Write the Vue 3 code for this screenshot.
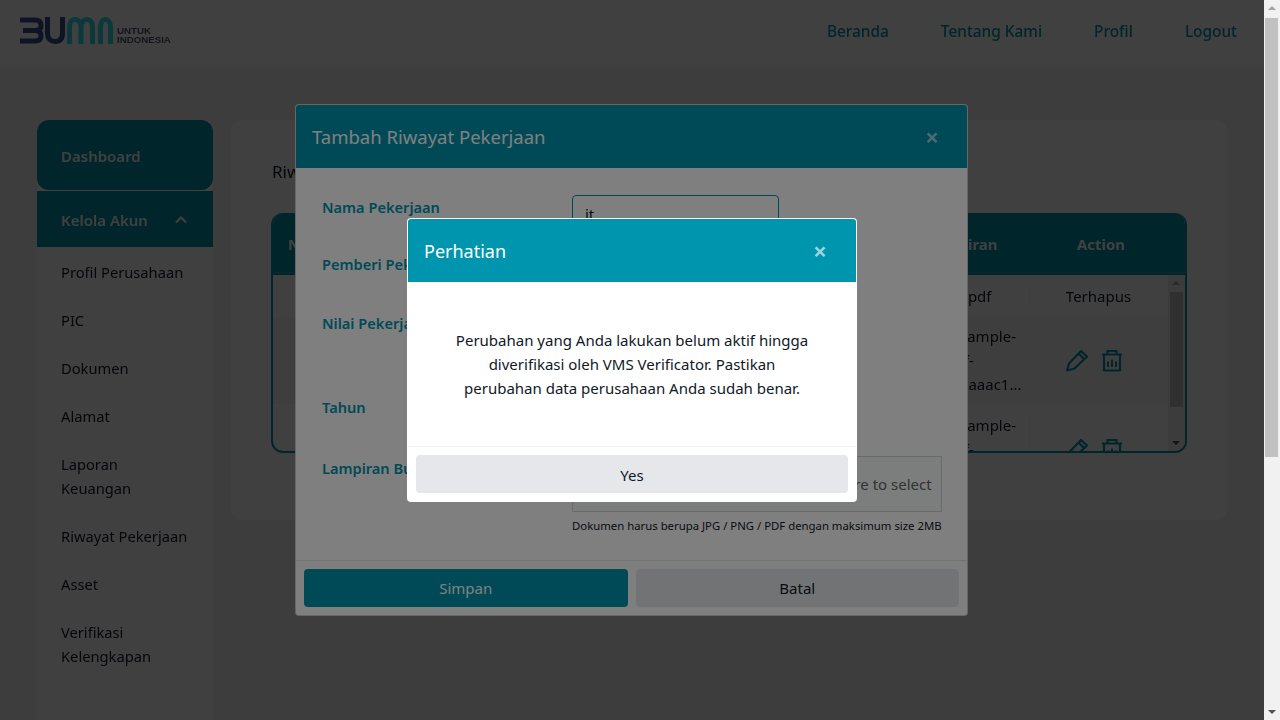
<template>
  <div class="shell">
    <div class="viewport">
      <div class="page">
        <header class="topbar">
          <div class="logo">
            <svg width="94" height="27" viewBox="0 0 94 27" fill="none" stroke-width="5">
              <path d="M0 3H15C20 3 21 6 21 8.5C21 11.5 19 13.5 15 13.5H3M15 13.5C20 13.5 21 16 21 18.5C21 22 19 24 15 24H0" stroke="#38508f" />
              <path d="M27.5 0V16C27.5 22 31 24.5 35 24.5C39.5 24.5 42.5 22 42.5 16V0" stroke="#38508f" />
              <path d="M49.5 27V10C49.5 5 52 2.5 55 2.5C58.5 2.5 61 5 61 10V27M61 10C61 5 63.5 2.5 67 2.5C70 2.5 72.5 5 72.5 10V27" stroke="#2ce0e8" />
              <path d="M80.5 27V10C80.5 5 83 2.5 85.5 2.5C88 2.5 90.5 5 90.5 10V27" stroke="#2ce0e8" />
            </svg>
            <div class="logo-text">UNTUK<br />INDONESIA</div>
          </div>
          <nav class="nav">
            <a v-for="item in navItems" :key="item">{{ item }}</a>
          </nav>
        </header>

        <main class="main">
          <aside class="sidebar">
            <div class="side-dash">Dashboard</div>
            <div class="side-group">
              <span>Kelola Akun</span>
              <svg width="12" height="8" viewBox="0 0 12 8" fill="none"><path d="M1 6.5L6 1.5L11 6.5" stroke="#fff" stroke-width="2" /></svg>
            </div>
            <ul class="side-list">
              <li v-for="item in sideItems" :key="item">{{ item }}</li>
            </ul>
          </aside>

          <section class="card">
            <h2 class="card-title">Riwayat Pekerjaan</h2>
            <div class="table-box">
              <div class="table-head">
                <div class="th-no">No</div>
                <div class="th-center">Lampiran</div>
                <div class="th-center">Action</div>
              </div>
              <div class="table-body">
                <div class="row row-first">
                  <div></div>
                  <div class="td-file">i.pdf</div>
                  <div class="td-action">Terhapus</div>
                </div>
                <div v-for="(r, i) in fileRows" :key="i" class="row" :class="r.cls">
                  <div></div>
                  <div class="td-file">sample-<br />if-<br />aaaac1...</div>
                  <div class="td-action icons">
                    <svg class="act-icon" viewBox="0 0 22 22" fill="none" stroke="#0095ae" stroke-width="2.2" stroke-linejoin="round">
                      <path d="M1 20.5L3 13.5L15 1L21 6.5L8.5 18.5Z" />
                      <path d="M12.5 3.5L18 9" />
                    </svg>
                    <svg class="act-icon" viewBox="0 0 22 22" fill="none" stroke="#0095ae" stroke-width="2.2" stroke-linejoin="round">
                      <path d="M1 4.5H21M6.5 4V1H15.5V4M3 5V20.5H19V5" />
                      <path d="M7 11.5V17M11 9.5V17M15 11.5V17" stroke-width="2" />
                    </svg>
                  </div>
                </div>
              </div>
              <div class="table-scroll">
                <i class="arrow-up"></i>
                <b class="thumb"></b>
                <i class="arrow-down"></i>
              </div>
            </div>
          </section>
        </main>
      </div>

      <div class="overlay overlay-first">
        <div class="modal modal-form">
          <div class="modal-head head-form">
            <span>Tambah Riwayat Pekerjaan</span>
            <span class="close">&times;</span>
          </div>
          <div class="form-body">
            <div class="form-row row-nama">
              <label>Nama Pekerjaan</label>
              <div class="input">it</div>
            </div>
            <div class="form-row row-pemberi"><label>Pemberi Pekerjaan</label></div>
            <div class="form-row row-nilai"><label>Nilai Pekerjaan</label></div>
            <div class="form-row row-tahun"><label>Tahun</label></div>
            <div class="form-row row-file">
              <label>Lampiran Bukti</label>
              <div class="file-col">
                <div class="dropzone">Drag and drop a file here or click here to select</div>
                <div class="hint">Dokumen harus berupa JPG / PNG / PDF dengan maksimum size 2MB</div>
              </div>
            </div>
          </div>
          <div class="modal-foot">
            <button class="btn btn-save">Simpan</button>
            <button class="btn btn-cancel">Batal</button>
          </div>
        </div>
      </div>

      <div class="overlay">
        <div class="modal modal-alert">
          <div class="modal-head head-alert">
            <span>Perhatian</span>
            <span class="close">&times;</span>
          </div>
          <div class="alert-body">
            Perubahan yang Anda lakukan belum aktif hingga diverifikasi oleh VMS Verificator. Pastikan perubahan data perusahaan Anda sudah benar.
          </div>
          <div class="alert-foot">
            <button class="btn btn-cancel btn-yes">Yes</button>
          </div>
        </div>
      </div>
    </div>

    <div class="page-scroll">
      <i class="arrow-up"></i>
      <b class="page-thumb"></b>
      <i class="arrow-down"></i>
    </div>
  </div>
</template>

<script setup>
const navItems = ['Beranda', 'Tentang Kami', 'Profil', 'Logout']
const sideItems = [
  'Profil Perusahaan',
  'PIC',
  'Dokumen',
  'Alamat',
  'Laporan Keuangan',
  'Riwayat Pekerjaan',
  'Asset',
  'Verifikasi Kelengkapan',
]
const fileRows = [{ cls: 'row-alt' }, { cls: 'row-last' }]
</script>

<style>
html,
body {
  margin: 0;
  overflow: hidden;
  font-family: "Noto Sans", "Open Sans", sans-serif;
}
</style>

<style scoped>
.shell {
  display: flex;
  width: 1280px;
  height: 720px;
}
.viewport {
  position: relative;
  width: 1264px;
  height: 720px;
  overflow: hidden;
}
.page {
  background: #f3f4f6;
  height: 720px;
  color: #111827;
  filter: brightness(0.5);
}

.topbar {
  height: 66px;
  background: #fff;
  display: flex;
  align-items: center;
  justify-content: space-between;
  padding: 0 27px 4px 20px;
  box-sizing: border-box;
}
.logo {
  display: flex;
  align-items: center;
  gap: 3px;
  margin-top: -1px;
}
.logo-text {
  font-family: "Liberation Sans", sans-serif;
  font-weight: 700;
  font-size: 9.7px;
  line-height: 9.5px;
  color: #555a70;
  margin-top: 9px;
}
.nav {
  display: flex;
  gap: 52px;
  font-size: 15.4px;
  font-weight: 500;
  color: #0095ae;
}

.main {
  display: flex;
  align-items: flex-start;
  gap: 18px;
  padding: 54px 37px 0;
}
.sidebar {
  width: 176px;
  height: 600px;
  background: #fff;
  flex-shrink: 0;
  border-radius: 12px 12px 0 0;
}
.side-dash {
  height: 70px;
  background: #0095ae;
  border-radius: 12px;
  color: #fff;
  font-weight: 600;
  font-size: 15px;
  display: flex;
  align-items: center;
  padding: 2px 0 0 24px;
  box-sizing: border-box;
}
.side-group {
  margin-top: 1px;
  height: 56px;
  background: #0095ae;
  color: #fff;
  font-weight: 600;
  font-size: 15px;
  display: flex;
  align-items: center;
  justify-content: space-between;
  padding: 2px 26px 0 24px;
  box-sizing: border-box;
}
.side-list {
  list-style: none;
  margin: 0;
  padding: 1px 0 0;
}
.side-list li {
  padding: 12px 22px 12px 24px;
  font-size: 14.7px;
  line-height: 24px;
}

.card {
  width: 996px;
  height: 400px;
  background: #fff;
  border-radius: 12px;
  padding: 40px;
  box-sizing: border-box;
}
.card-title {
  margin: 0 0 29px 1px;
  font-size: 17px;
  font-weight: 400;
  line-height: 24px;
}
.table-box {
  position: relative;
  width: 916px;
  height: 240px;
  border: 2px solid #0095ae;
  border-top: 0;
  border-radius: 12px;
  box-sizing: border-box;
  overflow: hidden;
}
.table-head {
  height: 62px;
  background: #0095ae;
  box-shadow: inset 0 -2px 0 #0095ae, inset 0 -3px 0 rgba(255, 255, 255, 0.15);
  margin: 0 -2px;
  display: grid;
  grid-template-columns: 622px 138px 140px;
  align-items: center;
  color: #fff;
  font-weight: 700;
  font-size: 15px;
}
.th-no {
  padding-left: 17px;
}
.th-center {
  text-align: center;
}
.table-body {
  height: 176px;
  overflow: hidden;
  font-size: 15px;
  line-height: 24px;
}
.row {
  display: grid;
  grid-template-columns: 687px 69px 138px;
}
.row-first {
  padding: 9px 0;
}
.row-alt {
  background: #f9fafb;
  padding: 7px 0 8px;
}
.row-last {
  padding: 9px 0 7px;
}
.td-file {
  white-space: nowrap;
  min-height: 24px;
}
.td-action {
  border-left: 1px solid #f3f4f6;
  text-align: center;
}
.icons {
  display: flex;
  align-items: center;
  justify-content: center;
  gap: 13px;
  padding: 2px 9px 0 0;
}
.act-icon {
  width: 22px;
  height: 22px;
}
.table-scroll {
  position: absolute;
  top: 62px;
  right: 0;
  bottom: 0;
  width: 17px;
  background: #f1f1f1;
}
.thumb {
  position: absolute;
  top: 17px;
  left: 2px;
  right: 2px;
  height: 115px;
  background: #c1c1c1;
}
.arrow-up {
  position: absolute;
  top: 6px;
  left: 4px;
  border: 4px solid transparent;
  border-top: 0;
  border-bottom: 4px solid #a3a3a3;
}
.arrow-down {
  position: absolute;
  bottom: 6px;
  left: 4px;
  border: 4px solid transparent;
  border-bottom: 0;
  border-top: 4px solid #505050;
}

.page-scroll {
  position: relative;
  width: 16px;
  height: 720px;
  background: #f1f1f1;
}
.page-thumb {
  position: absolute;
  top: 18px;
  left: 1px;
  right: 2px;
  height: 439px;
  background: #c1c1c1;
}

.overlay {
  position: absolute;
  inset: 0;
  display: flex;
  align-items: center;
  justify-content: center;
  background: rgba(0, 0, 0, 0.5);
}
.overlay-first {
  background: none;
}
.modal {
  background: #fff;
  border: 1px solid rgba(0, 0, 0, 0.2);
  border-radius: 4px;
  box-sizing: border-box;
  overflow: hidden;
  color: #111827;
}
.modal-head {
  height: 63px;
  display: flex;
  align-items: center;
  justify-content: space-between;
  color: #fff;
  font-size: 18.5px;
  background: #0095ae;
}
.head-form {
  padding: 0 28px 0 16px;
}
.head-alert {
  padding: 0 29px 0 16px;
  font-size: 18px;
}
.close {
  font-size: 24px;
  font-weight: 700;
  opacity: 0.6;
  line-height: 1;
}

.modal-form {
  width: 673px;
  height: 512px;
  margin-right: 1px;
}
.form-body {
  height: 393px;
  box-sizing: border-box;
  border-bottom: 1px solid #e5e7eb;
  padding: 27px 26px 0;
}
.form-row {
  display: flex;
}
.form-row label {
  width: 250px;
  flex-shrink: 0;
  font-size: 14.6px;
  font-weight: 600;
  line-height: 24px;
  color: #0095ae;
}
.row-nama {
  height: 57px;
}
.row-pemberi {
  height: 59px;
}
.row-nilai {
  height: 84px;
}
.row-tahun {
  height: 61px;
}
.input {
  width: 207px;
  height: 40px;
  border: 1px solid #0095ae;
  border-radius: 4px;
  box-sizing: border-box;
  padding: 8px 12px;
  font-size: 15px;
}
.file-col {
  width: 370px;
}
.dropzone {
  height: 56px;
  border: 1px solid #d1d5db;
  background: #f9fafb;
  box-sizing: border-box;
  padding: 0 9px;
  display: flex;
  align-items: center;
  justify-content: flex-end;
  font-size: 15px;
  color: #666;
  white-space: nowrap;
  overflow: hidden;
}
.hint {
  font-size: 11.35px;
  line-height: 16px;
  margin-top: 6px;
  white-space: nowrap;
}
.modal-foot {
  display: flex;
  gap: 8px;
  padding: 8px;
}
.alert-foot {
  display: flex;
  padding: 8px;
}
.btn {
  flex: 1;
  height: 38px;
  border: 0;
  border-radius: 4px;
  font-family: inherit;
  font-size: 15px;
  color: #111827;
}
.btn-save {
  background: #0095ae;
  color: #fff;
}
.btn-cancel {
  background: #e5e7eb;
}
.btn-yes {
  padding-top: 3px;
}

.modal-alert {
  width: 450px;
  height: 284px;
  border-color: rgba(255, 255, 255, 0.6);
}
.alert-body {
  height: 165px;
  box-sizing: border-box;
  padding: 46px 44px 0;
  text-align: center;
  font-size: 15px;
  line-height: 24px;
  border-bottom: 1px solid #f0f0f0;
}
</style>
